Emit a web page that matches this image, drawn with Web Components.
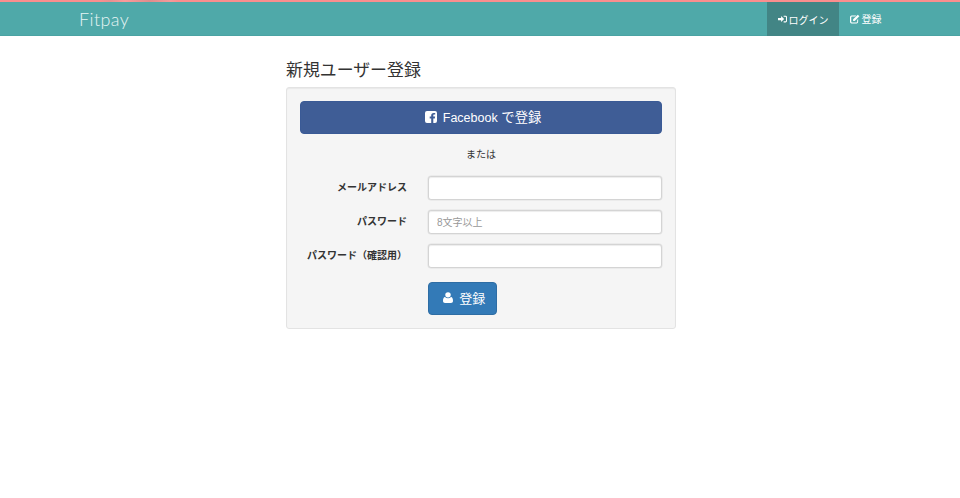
<!DOCTYPE html>
<html lang="ja">
<head>
<meta charset="utf-8">
<title>Fitpay</title>
<style>
    html, body { margin: 0; padding: 0; background: #fff; }
    body { font-family: "Liberation Sans", "Noto Sans CJK JP", sans-serif; font-size: 11px; color: #333; }
</style>
</head>
<body>
<app-navbar></app-navbar>
<signup-page>
    <signup-field label="メールアドレス"></signup-field>
    <signup-field label="パスワード" placeholder="8文字以上"></signup-field>
    <signup-field label="パスワード（確認用）"></signup-field>
</signup-page>

<script>
class AppNavbar extends HTMLElement {
    constructor(){
        super();
        this.attachShadow({mode: 'open'})
    }

    connectedCallback(){
        this.shadowRoot.innerHTML = `
        <style>
            :host { display: block; }
            .strip {
                height: 2px;
                background:
                    linear-gradient(90deg, #fb8e8e 100px, #e89090 110px, #fb9a9a 125px, #df8c8c 150px, #f49a9a 170px, #fb8e8e 178px);
            }
            nav {
                height: 33px;
                background: #4fa9a9;
                border-bottom: 1px solid #4aa3a3;
                display: flex;
                justify-content: space-between;
                padding: 0 68px 0 79px;
                color: #fff;
            }
            .brand {
                font-family: "Lato", sans-serif;
                font-weight: 300;
                font-size: 18px;
                line-height: 35px;
                letter-spacing: .4px;
                color: #e6f4f4;
            }
            .links { display: flex; }
            a {
                display: flex;
                align-items: center;
                gap: 2px;
                padding: 0 10.5px;
                font-size: 10px;
                color: #fff;
            }
            a.active { background: #428585; margin-bottom: -1px; }
            svg { height: 10px; fill: currentColor; }
        </style>
        <div class="strip"></div>
        <nav>
            <div class="brand">Fitpay</div>
            <div class="links">
                <a class="active">
                    <svg width="9" viewBox="0 0 16 16"><path d="M0 6h5.500V2.800L11 8l-5.500 5.200V10H0z"/><path d="M10 2h3.500A2.500 2.500 0 0 1 16 4.500v7a2.500 2.500 0 0 1-2.500 2.500H10v-1.800h3.200c.6 0 1-.4 1-1V4.800c0-.6-.4-1-1-1H10z"/></svg>
                    ログイン
                </a>
                <a>
                    <svg width="10" viewBox="0 0 16 16"><path d="M2.500 2.500H10L8.500 4H3a1 1 0 0 0-1 1v7.500a1 1 0 0 0 1 1h7.500a1 1 0 0 0 1-1V9.500L13 8v4.500a2.500 2.500 0 0 1-2.500 2.500h-8A2.500 2.500 0 0 1 0 12.500V5a2.500 2.500 0 0 1 2.500-2.500z"/><path d="M5 8.500 12.500 1 15 3.500 7.500 11H5z"/></svg>
                    登録
                </a>
            </div>
        </nav>`;
    }
}

class SignupField extends HTMLElement {
    constructor(){
        super();
        this.attachShadow({mode: 'open'})
    }

    connectedCallback(){
        const label = this.getAttribute('label');
        const placeholder = this.getAttribute('placeholder') || '';
        this.shadowRoot.innerHTML = `
        <style>
            :host { display: flex; align-items: center; height: 24px; }
            label {
                width: 107px;
                text-align: right;
                font-weight: 700;
                font-size: 10px;
                line-height: 20px;
                color: #333;
                white-space: nowrap;
                flex-shrink: 0;
            }
            input {
                margin-left: 21px;
                flex: 1;
                min-width: 0;
                box-sizing: border-box;
                height: 24px;
                padding: 0 8px;
                font: 10px "Liberation Sans", "Noto Sans CJK JP", sans-serif;
                border: 1px solid #d4d4d4;
                border-radius: 3px;
                background: #fff;
                box-shadow: 0 0 0 .5px #e2e2e2, inset 0 1px 1px rgba(0,0,0,.075);
                outline: none;
            }
            input::placeholder { color: #999; opacity: 1; }
        </style>
        <label>${label}</label>
        <input placeholder="${placeholder}">`;
    }
}

class SignupPage extends HTMLElement {
    constructor(){
        super();
        this.attachShadow({mode: 'open'})
    }

    connectedCallback(){
        this.shadowRoot.innerHTML = `
        <style>
            :host { display: block; width: 390px; margin: 0 auto 0 286px; }
            h1 {
                margin: 0;
                padding-top: 23px;
                height: 28px;
                font-size: 16.900px;
                font-weight: 400;
                line-height: 24px;
                color: #333;
            }
            .well {
                box-sizing: border-box;
                height: 242px;
                background: #f5f5f5;
                border: 1px solid #e3e3e3;
                border-radius: 3px;
                padding: 13px;
                box-shadow: inset 0 1px 1px rgba(0,0,0,.05);
                display: flex;
                flex-direction: column;
            }
            button {
                font-family: inherit;
                color: #fff;
                border-radius: 4px;
                display: flex;
                align-items: center;
                justify-content: center;
                box-sizing: border-box;
                height: 33px;
                padding: 0 0 2px;
            }
            .fb {
                background: #3f5d96;
                border: 1px solid #3a5a96;
                font-size: 13.300px;
                gap: 6px;
                width: 100%;
                padding-left: 4px;
            }
            .fb b { font-weight: 400; font-size: 12.500px; }
            .or {
                text-align: center;
                font-size: 10px;
                line-height: 14px;
                margin: 14px 0 14px;
            }
            .fields { display: flex; flex-direction: column; gap: 10px; }
            .submit {
                margin: 14px 0 0 128px;
                width: 69px;
                background: #337ab7;
                border: 1px solid #2e6da4;
                font-size: 13px;
                gap: 6.500px;
                padding-left: 3px;
            }
            svg { fill: currentColor; display: block; }
        </style>
        <h1>新規ユーザー登録</h1>
        <div class="well">
            <button class="fb">
                <svg width="12" height="12" viewBox="0 0 12 12"><path d="M2 0h8a2 2 0 0 1 2 2v8a2 2 0 0 1-2 2H8.300V7.400h1.500l.3-1.800H8.300V4.500c0-.6.200-.9.900-.9h1V2h-1.500C7 2 6.200 3 6.200 4.300v1.300H4.700v1.800h1.500V12H2a2 2 0 0 1-2-2V2a2 2 0 0 1 2-2z"/></svg>
                <span><b>Facebook</b> で登録</span>
            </button>
            <div class="or">または</div>
            <div class="fields"><slot></slot></div>
            <button class="submit">
                <svg width="10" height="11" viewBox="0 0 11 12"><circle cx="5.500" cy="3.100" r="3"/><path d="M2.200 5.400C3.100 6.300 4.200 6.700 5.500 6.700s2.400-.4 3.300-1.300c1.500.2 2.200 1.700 2.200 4.400 0 1.400-.9 2.200-2.200 2.200H2.200C.9 12 0 11.200 0 9.800c0-2.700.7-4.200 2.200-4.400z"/></svg>
                <span>登録</span>
            </button>
        </div>`;
    }
}

customElements.define('app-navbar', AppNavbar);
customElements.define('signup-field', SignupField);
customElements.define('signup-page', SignupPage);
</script>
</body>
</html>
